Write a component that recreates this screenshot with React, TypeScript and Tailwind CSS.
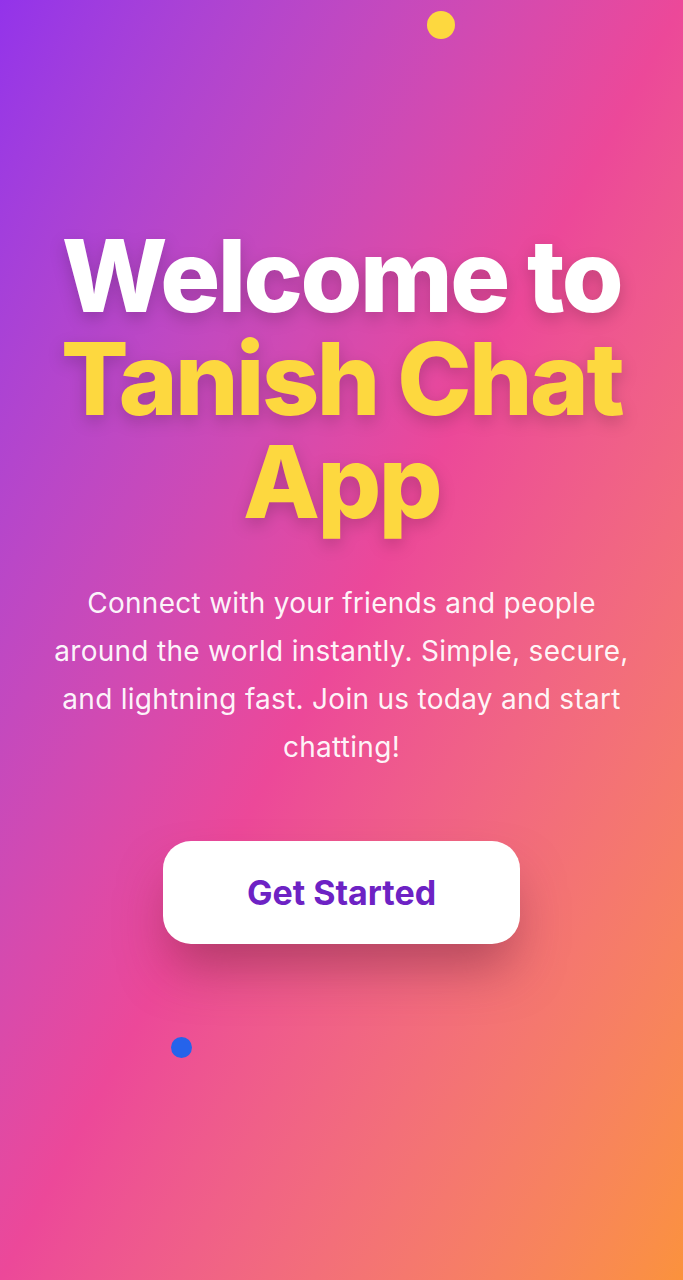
import React from 'react'

export default function App() {
  return (
    <main className="relative min-h-[1280px] w-full overflow-hidden bg-linear-to-br from-[#9333ea] via-[#ec4899] to-[#fb923c] font-['Inter',sans-serif]">
      {/* floating dots */}
      <span className="absolute left-[427px] top-[11px] h-[28px] w-[28px] rounded-full bg-[#fdd83f]" />
      <span className="absolute left-[171px] top-[1037px] h-[21px] w-[21px] rounded-full bg-[#2563eb]" />

      <section className="flex flex-col items-center px-4 pt-[224px] text-center">
        <h1 className="text-[100px] font-extrabold leading-[103px] tracking-[-0.025em] text-white drop-shadow-[0_6px_8px_rgba(0,0,0,0.18)]">
          Welcome to
          <br />
          <span className="text-[#fdd83f]">
            Tanish Chat
            <br />
            App
          </span>
        </h1>

        <p className="mt-[46px] w-[640px] text-[28px] font-normal leading-[48px] tracking-[0.01em] text-white/95">
          Connect with your friends and people
          <br />
          around the world instantly. Simple, secure,
          <br />
          and lightning fast. Join us today and start
          <br />
          chatting!
        </p>

        <button className="mt-[70px] h-[103px] w-[357px] rounded-[28px] bg-white text-[34px] font-bold text-[#6d22c4] shadow-[0_30px_50px_-8px_rgba(120,40,60,0.5)]">
          Get Started
        </button>
      </section>
    </main>
  )
}
